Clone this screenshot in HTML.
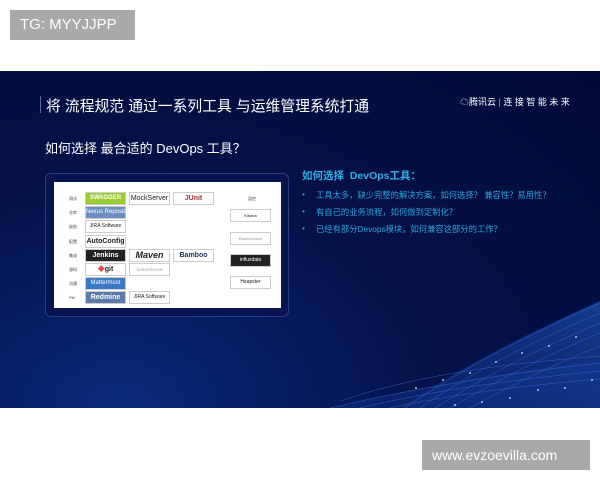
<!DOCTYPE html><html><head><meta charset="utf-8"><style>
*{margin:0;padding:0;box-sizing:border-box}
body{width:600px;height:480px;background:#fff;position:relative;overflow:hidden;font-family:"Liberation Sans","Noto Sans CJK SC",sans-serif}
.a{position:absolute}
.slide{left:0;top:71px;width:600px;height:337px;background:radial-gradient(ellipse at 20% 100%,#0a2a7a 0%,#04124a 45%,#020a38 100%);overflow:hidden}
.lab{background:#a9a9a9;color:#fff;font-size:15px;line-height:30px;padding-left:10px}
.b{position:absolute;background:#fff;border:1px solid #ccc;font-size:7px;text-align:center;line-height:11px;height:13px;width:41px;color:#222;overflow:hidden;white-space:nowrap}
.r{position:absolute;left:15px;font-size:4px;color:#444}
li{list-style:none;position:relative;padding-left:14px;margin-bottom:5px}
li:before{content:"•";position:absolute;left:0}
</style></head><body>
<div class="a lab" style="left:10px;top:10px;width:125px;height:30px">TG: MYYJJPP</div>
<div class="a slide">
<svg class="a" style="left:0;top:0" width="600" height="337">
<defs><linearGradient id="g" x1="0" y1="1" x2="1" y2="0"><stop offset="0" stop-color="#1a4ab8" stop-opacity="0.2"/><stop offset="1" stop-color="#2a6ae0" stop-opacity="0.5"/></linearGradient></defs>
<path d="M400 337 C470 290 530 262 600 230 L600 337 Z" fill="url(#g)"/>
<path d="M330 337 C420 315 510 300 600 290 L600 337 Z" fill="#1a4ab8" opacity="0.25"/>
<g fill="none" stroke="#3a6ad8" stroke-width="0.5" opacity="0.8">
<path d="M405 337 C470 292 530 264 600 232"/><path d="M420 337 C480 296 535 270 600 242"/><path d="M435 337 C490 302 540 277 600 252"/><path d="M450 337 C500 308 545 285 600 262"/><path d="M470 337 C510 315 550 295 600 275"/><path d="M330 337 C420 316 510 302 600 292"/><path d="M360 337 C440 318 520 308 600 300"/><path d="M390 337 C460 322 530 314 600 308"/><path d="M340 330 C430 300 520 292 600 285"/>
</g>
<g fill="#b0ccff"><circle cx="576" cy="266" r="1"/><circle cx="549" cy="275" r="1"/><circle cx="522" cy="282" r="1"/><circle cx="496" cy="291" r="1"/><circle cx="470" cy="302" r="1"/><circle cx="443" cy="309" r="1"/><circle cx="416" cy="317" r="1"/><circle cx="592" cy="309" r="1"/><circle cx="565" cy="317" r="1"/><circle cx="538" cy="319" r="1"/><circle cx="510" cy="327" r="1"/><circle cx="482" cy="331" r="1"/><circle cx="455" cy="334" r="1"/></g>
</svg>
<div class="a" style="left:40px;top:25px;width:1px;height:17px;background:#5a6aa0"></div>
<div class="a" style="left:46px;top:24px;color:#fff;font-size:14.8px;white-space:nowrap">将 流程规范 通过一系列工具 与运维管理系统打通</div>
<div class="a" style="left:460px;top:24px;color:#fff;font-size:9px;white-space:nowrap">☁腾讯云 <span style="color:#aab">|</span> 连 接 智 能 未 来</div>
<div class="a" style="left:45px;top:67px;color:#fff;font-size:13px;white-space:nowrap">如何选择 最合适的 DevOps 工具？</div>
<div class="a" style="left:302px;top:97px;color:#2db0e8;font-size:10.5px;font-weight:bold;white-space:nowrap">如何选择&nbsp; DevOps工具：</div>
<ul class="a" style="left:302px;top:118px;color:#2aa5dc;font-size:8.3px;white-space:nowrap">
<li>工具太多，缺少完整的解决方案，如何选择？ 兼容性？易用性？</li>
<li>有自己的业务流程，如何做到定制化？</li>
<li>已经有部分Devops模块，如何兼容这部分的工作？</li></ul>
<div class="a" style="left:45px;top:102px;width:244px;height:144px;border:1px solid #2a3c80;border-radius:6px;background:#061450">
<div class="a" style="left:8px;top:8px;width:227px;height:126px;background:#fff">
<div class="r" style="top:14px">测试</div><div class="r" style="top:28px">仓库</div><div class="r" style="top:42px">缺陷</div><div class="r" style="top:57px">配置</div><div class="r" style="top:71px">集成</div><div class="r" style="top:85px">源码</div><div class="r" style="top:99px">沟通</div><div class="r" style="top:113px">PM</div>
<div class="b" style="left:31px;top:10px;background:#9acd32;color:#fff;font-weight:bold;font-size:6px">SWAGGER</div>
<div class="b" style="left:75px;top:10px">MockServer</div>
<div class="b" style="left:119px;top:10px;color:#a33;font-weight:bold">JUnit</div>
<div class="b" style="left:31px;top:24px;background:#6a8cc0;color:#fff;font-size:6px">Nexus Repository</div>
<div class="b" style="left:31px;top:38px;font-size:5px">JIRA Software</div>
<div class="b" style="left:31px;top:53px;font-weight:bold">AutoConfig</div>
<div class="b" style="left:31px;top:67px;background:#222;color:#fff;font-weight:bold">Jenkins</div>
<div class="b" style="left:75px;top:67px;font-weight:bold;font-style:italic;font-size:9px">Maven</div>
<div class="b" style="left:119px;top:67px;color:#235;font-weight:bold">Bamboo</div>
<div class="b" style="left:31px;top:81px;font-weight:bold"><span style="color:#e44">◆</span>git</div>
<div class="b" style="left:75px;top:81px;font-size:4px;color:#99a">SUBVERSION</div>
<div class="b" style="left:31px;top:95px;background:#3a78c8;color:#fff;font-size:6px">Mattermost</div>
<div class="b" style="left:31px;top:109px;background:#5a7aa8;color:#fff;font-weight:bold">Redmine</div>
<div class="b" style="left:75px;top:109px;font-size:5px">JIRA Software</div>
<div class="r" style="left:194px;top:14px">监控</div>
<div class="b" style="left:176px;top:27px;font-size:4px">Kibana</div>
<div class="b" style="left:176px;top:50px;font-size:4px;color:#999">Elasticsearch</div>
<div class="b" style="left:176px;top:72px;background:#222;color:#fff;font-size:5px">influxdata</div>
<div class="b" style="left:176px;top:94px;font-size:5px">Heapster</div>
</div></div>
</div>
<div class="a lab" style="left:422px;top:440px;width:168px;height:30px;font-size:14px">www.evzoevilla.com</div>
</body></html>
